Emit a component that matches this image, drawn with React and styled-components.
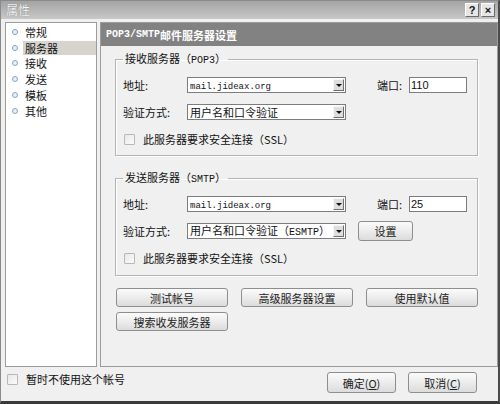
import React from "react";
import styled, { createGlobalStyle } from "styled-components";

const GlobalStyle = createGlobalStyle`
  html, body { margin: 0; padding: 0; }
  body {
    font-family: "Noto Sans CJK SC", "Liberation Sans", sans-serif;
    font-size: 11px;
    color: #111;
  }
`;

const Window = styled.div`
  width: 500px;
  height: 404px;
  box-sizing: border-box;
  background: #f0f0f0;
  border-left: 1px solid #8a8a8a;
  border-top: 1px solid #8a8a8a;
  border-right: 2px solid #4a4a4a;
  border-bottom: 3px solid #3a3a3a;
  display: flex;
  flex-direction: column;
`;

const TitleBar = styled.div`
  height: 18px;
  flex: none;
  display: flex;
  align-items: center;
  justify-content: space-between;
  padding: 0 3px 0 5px;
  background: linear-gradient(to bottom, #a4a4a4, #c8c8c8);
`;

const Title = styled.span`
  color: #f6f6f6;
  font-size: 12px;
  line-height: 14px;
  text-shadow: 0 0 1px #666;
`;

const TitleButtons = styled.div`
  display: flex;
  gap: 2px;
`;

const TitleButton = styled.span`
  width: 12px;
  height: 12px;
  display: flex;
  align-items: center;
  justify-content: center;
  background: #e6e6e6;
  border: 1px solid;
  border-color: #fff #6a6a6a #6a6a6a #fff;
  font-family: "Liberation Sans", sans-serif;
  font-weight: bold;
  font-size: 11px;
  line-height: 12px;
  color: #111;
`;

const Body = styled.div`
  flex: none;
  height: 345px;
  display: flex;
  gap: 3px;
  padding: 3px 1px 0 4px;
`;

const NavList = styled.div`
  width: 90px;
  flex: none;
  background: #fff;
  border: 1px solid #9c9c9c;
  padding-top: 1px;
`;

const NavItem = styled.div`
  height: 15.75px;
  display: flex;
  align-items: center;
`;

const Bullet = styled.span`
  width: 17px;
  flex: none;
  display: flex;
  justify-content: center;
  &::before {
    content: "";
    width: 4px;
    height: 4px;
    border-radius: 50%;
    border: 1px solid #82a8c8;
    background: #e6f0f8;
  }
`;

const NavLabel = styled.span`
  flex: 1;
  height: 14px;
  line-height: 14px;
  padding-left: 2px;
  background: ${(p) => (p.$selected ? "#d7d4cf" : "transparent")};
`;

const Panel = styled.div`
  flex: 1;
  display: flex;
  flex-direction: column;
  border: 1px solid #9c9c9c;
`;

const PanelHeader = styled.div`
  height: 23px;
  flex: none;
  background: #828282;
  color: #fff;
  font-weight: bold;
  display: flex;
  align-items: center;
  padding-left: 5px;
  font-size: 11px;
`;

const Mono = styled.span`
  font-family: "Liberation Mono", monospace;
  font-size: ${(p) => p.$size || 10}px;
  font-weight: ${(p) => (p.$bold ? "bold" : "normal")};
`;

const PanelContent = styled.div`
  padding: 5px 19px 0 14px;
  display: flex;
  flex-direction: column;
  gap: 14px;
`;

const Group = styled.fieldset`
  margin: 0;
  padding: 8px 0 ${(p) => p.$bottom || 7}px 7px;
  border: 1px solid #b4b4b4;
  box-shadow: inset 1px 1px 0 #fff, 1px 1px 0 #fff;
  display: flex;
  flex-direction: column;
  gap: 9px;
`;

const Legend = styled.legend`
  padding: 0 2px;
  margin-left: 0;
  line-height: 14px;
  font-size: 11px;
`;

const Row = styled.div`
  height: 18px;
  display: flex;
  align-items: center;
`;

const FieldLabel = styled.span`
  width: 64px;
  flex: none;
`;

const Combo = styled.div`
  width: 159px;
  height: 16px;
  box-sizing: border-box;
  flex: none;
  background: #fff;
  border: 1px solid #7d7d7d;
  display: flex;
  align-items: center;
  padding-left: 2px;
  line-height: 14px;
  white-space: nowrap;
  overflow: hidden;
`;

const ComboText = styled.span`
  flex: 1;
  overflow: hidden;
`;

const ComboArrow = styled.span`
  width: 11px;
  height: 12px;
  flex: none;
  margin-right: 1px;
  box-sizing: border-box;
  background: #dedede;
  border: 1px solid;
  border-color: #f8f8f8 #6e6e6e #6e6e6e #f8f8f8;
  display: flex;
  align-items: center;
  justify-content: center;
  &::before {
    content: "";
    border-left: 3px solid transparent;
    border-right: 3px solid transparent;
    border-top: 3px solid #111;
  }
`;

const PortLabel = styled.span`
  margin-left: 31px;
  width: 32px;
  flex: none;
`;

const PortInput = styled.div`
  width: 58px;
  height: 16px;
  box-sizing: border-box;
  background: #fff;
  border: 1px solid #7d7d7d;
  font-family: "Liberation Sans", sans-serif;
  font-size: 11px;
  line-height: 14px;
  padding-left: 1px;
`;

const Check = styled.span`
  width: 11px;
  height: 11px;
  box-sizing: border-box;
  flex: none;
  border: 1px solid #b8b8b8;
  background: linear-gradient(135deg, #e8e8e8, #fbfbfb);
  border-radius: 1px;
`;

const CheckLabel = styled.span`
  margin-left: ${(p) => p.$gap || 8}px;
  color: #111;
`;

const Button = styled.div`
  width: ${(p) => p.$w || 112}px;
  height: ${(p) => p.$h || 19}px;
  box-sizing: border-box;
  flex: none;
  margin-left: ${(p) => p.$ml || 0}px;
  border: 1px solid #8e8e8e;
  border-radius: 3px;
  background: linear-gradient(to bottom, #fbfbfb, #ececec 50%, #dcdcdc);
  display: flex;
  align-items: center;
  justify-content: center;
  font-size: 11px;
  color: #222;
`;

const ButtonGrid = styled.div`
  margin: -2px 0 0 1px;
  display: grid;
  grid-template-columns: repeat(3, 112px);
  column-gap: 13px;
  row-gap: 5px;
`;

const Footer = styled.div`
  flex: 1;
  display: flex;
  align-items: flex-start;
  padding: 5px 21px 0 6px;
`;

const FooterCheck = styled.div`
  display: flex;
  align-items: center;
  height: 12px;
  flex: 1;
  margin-top: 1px;
`;

const FooterButtons = styled.div`
  display: flex;
  gap: 12px;
`;

const navItems = ["常规", "服务器", "接收", "发送", "模板", "其他"];

function AddressRow({ port }) {
  return (
    <Row>
      <FieldLabel>地址:</FieldLabel>
      <Combo>
        <ComboText>
          <Mono $size={9}>mail.jideax.org</Mono>
        </ComboText>
        <ComboArrow />
      </Combo>
      <PortLabel>端口:</PortLabel>
      <PortInput>{port}</PortInput>
    </Row>
  );
}

function SslRow() {
  return (
    <Row>
      <Check style={{ marginLeft: 1 }} />
      <CheckLabel>此服务器要求安全连接（SSL）</CheckLabel>
    </Row>
  );
}

export default function App() {
  return (
    <>
      <GlobalStyle />
      <Window>
        <TitleBar>
          <Title>属性</Title>
          <TitleButtons>
            <TitleButton>?</TitleButton>
            <TitleButton>×</TitleButton>
          </TitleButtons>
        </TitleBar>
        <Body>
          <NavList>
            {navItems.map((item) => (
              <NavItem key={item}>
                <Bullet />
                <NavLabel $selected={item === "服务器"}>{item}</NavLabel>
              </NavItem>
            ))}
          </NavList>
          <Panel>
            <PanelHeader>
              <Mono $bold>POP3/SMTP</Mono>邮件服务器设置
            </PanelHeader>
            <PanelContent>
              <Group>
                <Legend>
                  接收服务器（<Mono>POP3</Mono>）
                </Legend>
                <AddressRow port="110" />
                <Row>
                  <FieldLabel>验证方式:</FieldLabel>
                  <Combo>
                    <ComboText>用户名和口令验证</ComboText>
                    <ComboArrow />
                  </Combo>
                </Row>
                <SslRow />
              </Group>
              <Group $bottom={8}>
                <Legend>
                  发送服务器（<Mono>SMTP</Mono>）
                </Legend>
                <AddressRow port="25" />
                <Row>
                  <FieldLabel>验证方式:</FieldLabel>
                  <Combo>
                    <ComboText>
                      用户名和口令验证（<Mono>ESMTP</Mono>）
                    </ComboText>
                    <ComboArrow />
                  </Combo>
                  <Button $w={55} $h={20} $ml={12}>
                    设置
                  </Button>
                </Row>
                <SslRow />
              </Group>
              <ButtonGrid>
                <Button>测试帐号</Button>
                <Button>高级服务器设置</Button>
                <Button>使用默认值</Button>
                <Button>搜索收发服务器</Button>
              </ButtonGrid>
            </PanelContent>
          </Panel>
        </Body>
        <Footer>
          <FooterCheck>
            <Check />
            <CheckLabel $gap={8}>暂时不使用这个帐号</CheckLabel>
          </FooterCheck>
          <FooterButtons>
            <Button $w={69} $h={21}>
              确定(<u>O</u>)
            </Button>
            <Button $w={69} $h={21}>
              取消(<u>C</u>)
            </Button>
          </FooterButtons>
        </Footer>
      </Window>
    </>
  );
}
